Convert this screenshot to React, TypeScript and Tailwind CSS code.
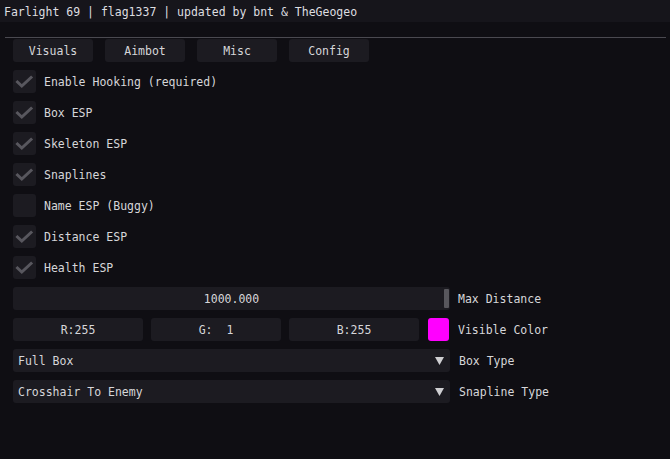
import React from "react";

const font = { fontFamily: '"DejaVu Sans Mono", "Liberation Mono", monospace' };

function Check({ on }: { on: boolean }) {
  return (
    <div className="w-[23px] h-[23px] rounded-[3px] bg-[#1c1b21] flex items-center justify-center shrink-0">
      {on && (
        <svg width="23" height="23" viewBox="0 0 23 23">
          <path d="M4.5 12 L8.8 16 L18 7.5" stroke="#58575e" strokeWidth="3" fill="none" strokeLinecap="square" />
        </svg>
      )}
    </div>
  );
}

function Row({ label, on }: { label: string; on: boolean }) {
  return (
    <div className="flex items-center gap-[8px] h-[23px]">
      <Check on={on} />
      <span>{label}</span>
    </div>
  );
}

function Combo({ value, label }: { value: string; label: string }) {
  return (
    <div className="flex items-center h-[23px]">
      <div className="w-[437px] h-[23px] rounded-[3px] bg-[#1c1b21] flex items-center pl-[5px] pr-[6px] justify-between">
        <span className="whitespace-pre">{value}</span>
        <svg width="9" height="8" viewBox="0 0 9 8">
          <path d="M0 0 H9 L4.5 8 Z" fill="#cfcfd2" />
        </svg>
      </div>
      <span className="ml-[9px]">{label}</span>
    </div>
  );
}

export default function App() {
  const tabs = ["Visuals", "Aimbot", "Misc", "Config"];
  const checks: [string, boolean][] = [
    ["Enable Hooking (required)", true],
    ["Box ESP", true],
    ["Skeleton ESP", true],
    ["Snaplines", true],
    ["Name ESP (Buggy)", false],
    ["Distance ESP", true],
    ["Health ESP", true],
  ];
  return (
    <div
      className="w-[670px] h-[459px] bg-[#0f0e13] text-[#d6d6d9] text-[11.5px] leading-[14px] overflow-hidden relative"
      style={font}
    >
      <div className="h-[22px] bg-[#16151b] flex items-center pl-[4px] pt-[1px] text-[#dedee0]">
        Farlight 69 | flag1337 | updated by bnt &amp; TheGeogeo
      </div>
      <div className="mt-[15px] ml-[5px] w-[661px] h-px bg-[#4a4950]" />
      <div className="pl-[13px] pt-[1px] flex flex-col gap-[8px]">
        <div className="flex gap-[12px]">
          {tabs.map((t) => (
            <div
              key={t}
              className="w-[80px] h-[23px] pt-[1px] rounded-[3px] bg-[#1c1b21] flex items-center justify-center"
            >
              {t}
            </div>
          ))}
        </div>
        {checks.map(([l, on]) => (
          <Row key={l} label={l} on={on} />
        ))}
        <div className="flex items-center h-[23px]">
          <div className="w-[437px] h-[23px] rounded-[3px] bg-[#1c1b21] relative flex items-center justify-center">
            <span>1000.000</span>
            <div className="absolute right-[1px] top-[2px] w-[5px] h-[19px] rounded-[1px] bg-[#58575d]" />
          </div>
          <span className="ml-[8px]">Max Distance</span>
        </div>
        <div className="flex items-center h-[23px]">
          <div className="flex gap-[8px]">
            {["R:255", "G:  1", "B:255"].map((v) => (
              <div
                key={v}
                className="w-[130px] h-[23px] rounded-[3px] bg-[#1c1b21] flex items-center justify-center whitespace-pre"
              >
                {v}
              </div>
            ))}
          </div>
          <div className="ml-[9px] w-[21px] h-[23px] rounded-[3px] bg-[#ff00ff]" />
          <span className="ml-[9px]">Visible Color</span>
        </div>
        <Combo value="Full Box" label="Box Type" />
        <Combo value="Crosshair To Enemy" label="Snapline Type" />
      </div>
    </div>
  );
}
